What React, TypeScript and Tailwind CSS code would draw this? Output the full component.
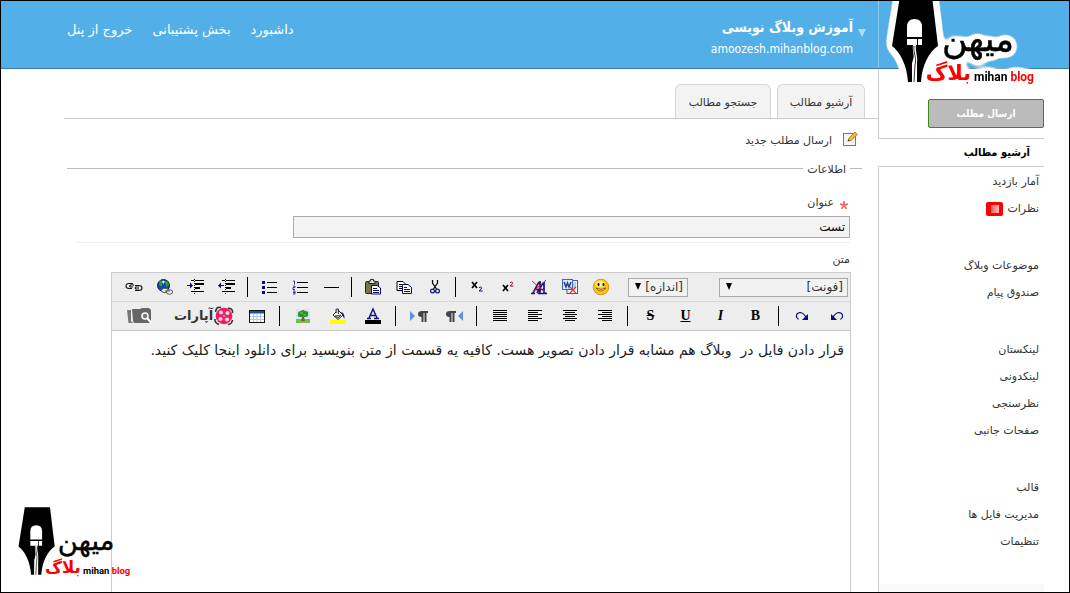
import React from 'react';

type Children = { children: React.ReactNode };

function Logo({ viewBox, halo, className }: { viewBox: string; halo: boolean; className: string }) {
  return (
    <svg viewBox={viewBox} className={className} role="img" aria-label="میهن بلاگ">
      {halo && (
        <defs>
          <filter id="halo" filterUnits="userSpaceOnUse" x="0" y="-20" width="190" height="120" colorInterpolationFilters="sRGB">
            <feGaussianBlur in="SourceAlpha" stdDeviation="4" />
            <feComponentTransfer result="spread">
              <feFuncA type="linear" slope="24" intercept="-0.900" />
            </feComponentTransfer>
            <feFlood floodColor="#fff" />
            <feComposite in2="spread" operator="in" result="white" />
            <feMerge>
              <feMergeNode in="white" />
              <feMergeNode in="SourceGraphic" />
            </feMerge>
          </filter>
        </defs>
      )}
      <g filter={halo ? 'url(#halo)' : undefined}>
        <path d="M30 -5 H62 L68 45 C59 51 52 64 51 81 H47 V62 L44 56 L42 62 V81 H38 C37 64 30 51 22 45 Z" fill="#000" />
        <g direction="rtl" fontFamily="'DejaVu Sans', sans-serif">
          <text x="144" y="50" fontSize="35" fill="#000" stroke="#000" strokeWidth="0.500">
            میهن
          </text>
          <text x="101" y="79" fontSize="21" fontWeight="bold" fill="#f00">
            بلاگ
          </text>
        </g>
        <text
          x="104"
          y="80"
          direction="ltr"
          fontFamily="Roboto, 'Liberation Sans', sans-serif"
          fontWeight="bold"
          fontSize="12"
          fill="#000"
        >
          mihan <tspan fill="#f00">blog</tspan>
        </text>
      </g>
      <path d="M37 36 V26 Q37 18 44.500 18 Q52 18 52 26 V36 Z" fill="#fff" />
      <path d="M37 38 H47 V44 H37 Z M48 38 H52 V44 H48 Z" fill="#fff" />
      <path d="M43 44 H46 C45 50 48 55 47 62 L46 81 H42 L43 62 C45 55 42 50 43 44 Z" fill="#fff" />
      <path d="M44 45 C43 52 47 56 45 64 L44 81" fill="none" stroke="#000" strokeWidth="0.800" />
    </svg>
  );
}

function Tool({ label, wide, children }: Children & { label: string; wide?: boolean }) {
  return (
    <button
      type="button"
      aria-label={label}
      title={label}
      className={
        wide
          ? 'flex h-5 w-[58px] shrink-0 items-center justify-center gap-px'
          : 'flex h-5 w-[23px] shrink-0 items-center justify-center'
      }
    >
      {children}
    </button>
  );
}

function Icon({ children }: Children) {
  return (
    <svg viewBox="0 0 16 16" className="h-4 w-4 shrink-0 overflow-visible" aria-hidden="true">
      {children}
    </svg>
  );
}

function Sep({ tight }: { tight?: boolean }) {
  return (
    <span className={tight ? '-mx-0.5 flex h-5 w-[3px] shrink-0 justify-center' : 'flex h-5 w-[3px] shrink-0 justify-center'}>
      <span className="w-px bg-black" />
    </span>
  );
}

function Lines({ d }: { d: string }) {
  return (
    <Icon>
      <path d={d} stroke="#000" strokeWidth="1" fill="none" shapeRendering="crispEdges" />
    </Icon>
  );
}

function Pilcrow({ flip }: { flip?: boolean }) {
  return (
    <Icon>
      <path d={flip ? 'M17 3 V13 L12 8 Z' : 'M-1 3 V13 L4 8 Z'} fill="#5b94dd" />
      <g transform={flip ? 'translate(-7 0)' : undefined}>
        <path d="M17 3 H11 Q7 3 7 6 Q7 9 10.500 9 V14 H12.500 V5 H13.500 V14 H15.500 V5 H17 Z" fill="#444" />
      </g>
    </Icon>
  );
}

function Dropdown({ label, text, className }: { label: string; text: string; className: string }) {
  return (
    <span className={className}>
      <select
        aria-label={label}
        className="block h-[19px] w-full appearance-none border border-[#aaa] bg-[#f2f2f2] px-1 text-[12px] leading-4 text-[#333]"
      >
        <option>{text}</option>
      </select>
      <svg viewBox="0 0 8 8" className="pointer-events-none absolute top-[5px] left-[6px] h-2 w-2" aria-hidden="true">
        <path d="M1 0 H7 L4 7 Z" fill="#000" />
      </svg>
    </span>
  );
}

function Toolbar() {
  return (
    <div className="border-b border-[#c5c5c5] bg-[#ededed]">
      <div className="flex h-[29px] items-center gap-2 border-b border-[#d8d8d8] pr-0.5">
        <Dropdown label="فونت" text="[فونت]" className="relative ml-[23px] w-[129px] shrink-0" />
        <Dropdown label="اندازه" text="[اندازه]" className="relative ml-2 w-[60px] shrink-0" />
        <Tool label="شکلک">
          <Icon>
            <circle cx="8" cy="8" r="7.800" fill="#f9c51c" stroke="#c98a08" strokeWidth="0.800" />
            <ellipse cx="7" cy="5" rx="5" ry="3.500" fill="#ffe978" />
            <ellipse cx="5.500" cy="5.500" rx="1" ry="1.800" fill="#222" />
            <ellipse cx="10.500" cy="5.500" rx="1" ry="1.800" fill="#222" />
            <path d="M3 9 Q8 15 13 9 Q8 12 3 9 Z" fill="#fff" stroke="#7a4a00" strokeWidth="0.800" />
          </Icon>
        </Tool>
        <Tool label="چسباندن از ورد">
          <Icon>
            <rect x="5" y="1.500" width="10.500" height="13" fill="#fff" stroke="#3a5c9c" />
            <path d="M11 4 H14 M11 6 H14 M11 8 H14" stroke="#7b9bd0" />
            <rect x="0.500" y="0.500" width="10" height="10" fill="#dbe8fb" stroke="#3a66b4" />
            <path d="M2 3 L4 8 L5.500 4 L7 8 L9 3" fill="none" stroke="#1d3f8c" strokeWidth="1.500" />
            <path d="M8 8 L14 14 M14 8 L8 14" stroke="#e33" strokeWidth="1.400" />
          </Icon>
        </Tool>
        <Tool label="حذف قالب">
          <Icon>
            <path d="M0 14.500 H4 M7 14.500 H16 M2 14 L8 3 M9 2 V14 M5 10.500 H13 M6 14 L12 4 M13 3 V14" stroke="#15158c" strokeWidth="1.700" fill="none" />
            <path d="M1 2 L15 14 M15 1 L2 13" stroke="#e02020" strokeWidth="1" />
          </Icon>
        </Tool>
        <Tool label="بالانویس">
          <Icon>
            <path d="M3 6 L8 12 M8 6 L3 12" stroke="#000" strokeWidth="1.700" />
            <path d="M10 4 Q11 2 12.500 3.500 Q13 5 10 7 H13.500" fill="none" stroke="#a01020" />
          </Icon>
        </Tool>
        <Tool label="زیرنویس">
          <Icon>
            <path d="M3 3 L8 9 M8 3 L3 9" stroke="#000" strokeWidth="1.700" />
            <path d="M10 9 Q11 7 12.500 8.500 Q13 10 10 12 H13.500" fill="none" stroke="#101080" />
          </Icon>
        </Tool>
        <Sep />
        <Tool label="برش">
          <Icon>
            <path d="M5.500 1 V4 L9.500 10 M10.500 1 V4 L6.500 10" fill="none" stroke="#000" strokeWidth="1.200" />
            <circle cx="5.500" cy="12" r="1.900" fill="none" stroke="#101080" strokeWidth="1.200" />
            <circle cx="10.500" cy="12" r="1.900" fill="none" stroke="#101080" strokeWidth="1.200" />
          </Icon>
        </Tool>
        <Tool label="کپی">
          <Icon>
            <path d="M1 2.500 H7 L9.500 5 V11.500 H1 Z" fill="#fff" stroke="#000" />
            <path d="M3 5.500 H6 M3 7.500 H6 M3 9.500 H6" stroke="#000" />
            <path d="M6.500 5.500 H12 L15.500 8.500 V14.500 H6.500 Z" fill="#fff" stroke="#0a0a70" />
            <path d="M8 8.500 H11 M8 10.500 H14 M8 12.500 H14" stroke="#0a0a70" />
          </Icon>
        </Tool>
        <Tool label="چسباندن">
          <Icon>
            <rect x="0.500" y="2.500" width="13" height="12" rx="1" fill="#77754a" stroke="#222" />
            <path d="M4 4.500 V2 H5.500 V0.500 H8.500 V2 H10 V4.500 Z" fill="#ddd" stroke="#222" />
            <path d="M6.500 6.500 H12 L15.500 9 V15 H6.500 Z" fill="#fff" stroke="#0a0a70" />
            <path d="M8 9.500 H12 M8 11.500 H14 M8 13.500 H14" stroke="#0a0a70" />
          </Icon>
        </Tool>
        <Sep />
        <Tool label="خط افقی">
          <Lines d="M0.500 8.500 H15.500" />
        </Tool>
        <Tool label="لیست شماره دار">
          <Icon>
            <path d="M5 3.500 H16 M5 8.500 H16 M5 13.500 H16" stroke="#000" shapeRendering="crispEdges" />
            <path d="M1 2 H2.500 V5.500 M1 7 H3 V8.500 H1 V10.500 H3 M1 12 H3 V15 H1 M1 13.500 H3" stroke="#22229a" fill="none" strokeWidth="0.900" />
          </Icon>
        </Tool>
        <Tool label="لیست">
          <Icon>
            <path d="M6 3.500 H16 M6 8.500 H16 M6 13.500 H16" stroke="#000" shapeRendering="crispEdges" />
            <path d="M1 2 H4 V5 H1 Z M1 7 H4 V10 H1 Z M1 12 H4 V15 H1 Z" fill="#0a0a80" />
          </Icon>
        </Tool>
        <Sep />
        <Tool label="کاهش تورفتگی">
          <Icon>
            <path d="M3 1.500 H6 M7 1.500 H16 M7 4.500 H16 M7 5.500 H16 M7 8.500 H12 M7 9.500 H12 M3 12.500 H16" stroke="#000" shapeRendering="crispEdges" />
            <path d="M6.500 0 V15" stroke="#000" strokeDasharray="1 1" />
            <path d="M-1 6.500 L2 3.500 V6 H5 V7 H2 V9.500 Z" fill="#0a0a80" />
          </Icon>
        </Tool>
        <Tool label="افزایش تورفتگی">
          <Icon>
            <path d="M3 1.500 H6 M7 1.500 H16 M7 4.500 H16 M7 5.500 H16 M7 8.500 H12 M7 9.500 H12 M3 12.500 H16" stroke="#000" shapeRendering="crispEdges" />
            <path d="M6.500 0 V15" stroke="#000" strokeDasharray="1 1" />
            <path d="M5 6.500 L2 3.500 V6 H-1 V7 H2 V9.500 Z" fill="#0a0a80" />
          </Icon>
        </Tool>
        <Tool label="پیوند">
          <Icon>
            <circle cx="6.500" cy="6.500" r="6" fill="#1546a8" stroke="#0a1d66" />
            <path d="M2 3 Q3 0 5 2 L5 7 Q2 8 2 3 Z M8 2 Q12 2 12 6 L9 8 Z" fill="#27a22c" />
            <path d="M5 2 Q7 1 8 3 L6 5 Z" fill="#dfeefc" />
            <ellipse cx="8" cy="11.500" rx="3.500" ry="2.200" fill="#eee" stroke="#555" />
            <ellipse cx="12.500" cy="13" rx="3.200" ry="2.200" fill="#eee" stroke="#555" />
            <path d="M8 12 H13" stroke="#555" />
          </Icon>
        </Tool>
        <Tool label="حذف پیوند">
          <Icon>
            <path
              d="M7 4.500 H3 Q0 4.500 0 7 Q0 9.500 3 9.500 H6 M8 6.500 Q6 5 4 6.500 Q3 8 5 8 H7 M9 6.500 H13 Q16 6.500 16 9 Q16 11.500 13 11.500 H9 M13 8 H10 Q8.500 9 10 10 H13"
              fill="none"
              stroke="#111"
              strokeWidth="1.100"
            />
          </Icon>
        </Tool>
      </div>
      <div className="flex h-7 items-center gap-3 pr-0.5">
        <Tool label="واگرد">
          <Icon>
            <path d="M4 9 Q7 4.500 10 4.500 Q14 5 13.500 9 L11.500 11.500" fill="none" stroke="#0a0a80" strokeWidth="1.200" />
            <path d="M2 6 V12 H8 Z" fill="#0a0a80" />
          </Icon>
        </Tool>
        <Tool label="ازنو">
          <Icon>
            <path d="M12 9 Q9 4.500 6 4.500 Q2 5 2.500 9 L4.500 11.500" fill="none" stroke="#0a0a80" strokeWidth="1.200" />
            <path d="M14 6 V12 H8 Z" fill="#0a0a80" />
          </Icon>
        </Tool>
        <Sep tight />
        <Tool label="ضخیم">
          <span className="font-['Liberation_Serif',serif] text-[14px] leading-4 font-black text-black">B</span>
        </Tool>
        <Tool label="مورب">
          <span className="font-['Liberation_Serif',serif] text-[14px] leading-4 font-black text-black italic">I</span>
        </Tool>
        <Tool label="زیرخط">
          <span className="font-['Liberation_Serif',serif] text-[14px] leading-4 font-black text-black underline">U</span>
        </Tool>
        <Tool label="خط خورده">
          <span className="font-['Liberation_Serif',serif] text-[14px] leading-4 font-black text-black line-through">S</span>
        </Tool>
        <Sep tight />
        <Tool label="راست چین">
          <Lines d="M1 2.500 H15 M5 4.500 H15 M1 6.500 H15 M5 8.500 H15 M1 10.500 H15 M5 12.500 H15" />
        </Tool>
        <Tool label="وسط چین">
          <Lines d="M1 2.500 H15 M3 4.500 H13 M1 6.500 H15 M3 8.500 H13 M1 10.500 H15 M3 12.500 H13" />
        </Tool>
        <Tool label="چپ چین">
          <Lines d="M1 2.500 H15 M1 4.500 H11 M1 6.500 H15 M1 8.500 H11 M1 10.500 H15 M1 12.500 H11" />
        </Tool>
        <Tool label="تراز دوطرفه">
          <Lines d="M1 2.500 H15 M1 4.500 H15 M1 6.500 H15 M1 8.500 H15 M1 10.500 H15 M1 12.500 H15" />
        </Tool>
        <Sep tight />
        <Tool label="راست به چپ">
          <Pilcrow flip />
        </Tool>
        <Tool label="چپ به راست">
          <Pilcrow />
        </Tool>
        <Sep tight />
        <Tool label="رنگ متن">
          <Icon>
            <path d="M2 10.500 H6 M9 10.500 H14 M4 10 L8 1 L12 10 M5.500 7.500 H10.500" stroke="#15157f" strokeWidth="1.500" fill="none" />
            <rect x="0" y="12" width="16" height="4" fill="#000" />
          </Icon>
        </Tool>
        <Tool label="رنگ زمینه">
          <Icon>
            <path d="M3 7 L8 2 L13 7 L8 11.500 Z" fill="#fff" stroke="#222" />
            <path d="M6 5 V1 H8.500 V6 M5 8 L11 7 L8 10 Z" fill="#bbb" stroke="#222" strokeWidth="0.800" />
            <path d="M11 4 Q15 5 14.500 11 Q13 9 12.500 7 Z" fill="#15157f" />
            <rect x="0" y="12" width="16" height="4" fill="#ff0" />
          </Icon>
        </Tool>
        <Tool label="تصویر">
          <Icon>
            <rect x="1" y="1" width="14" height="14" fill="#cfe8f8" />
            <path d="M1 11 H15 V15 H1 Z" fill="#74bd4a" />
            <path d="M7 9 H9 L10 13 H6 Z" fill="#8a5a22" />
            <path d="M3 6 Q3 3 6 3 Q8 1 10 3 Q14 3 13 6 Q14 9 10 9 H5 Q2 9 3 6 Z" fill="#2f8f2a" />
            <path d="M5 5 H8 M8 7 H11" stroke="#7ccc4c" />
          </Icon>
        </Tool>
        <Sep tight />
        <Tool label="جدول">
          <Icon>
            <rect x="0.500" y="2.500" width="15" height="12" fill="#fff" stroke="#111" />
            <rect x="1" y="3" width="14" height="2.500" fill="#1c49b8" />
            <path d="M4.500 6 V14 M8 6 V14 M11.500 6 V14 M1 8.500 H15 M1 11.500 H15" stroke="#b5c7e4" />
          </Icon>
        </Tool>
        <Tool label="آپارات" wide>
          <svg viewBox="0 0 20 20" className="h-5 w-5 shrink-0" aria-hidden="true">
            <path d="M7 1.500 Q3 0.500 2 4 L1.500 6 M14 2 L17 3 Q19 4 18.500 7 M18.500 14 Q18 18 14 18.500 M1 13 Q0.500 17 5 18.500" fill="none" stroke="#333" strokeWidth="1.600" />
            <circle cx="10" cy="10" r="8.300" fill="#ed1c62" />
            <circle cx="7" cy="6.500" r="2.100" fill="#fbd5e2" />
            <circle cx="13.500" cy="7" r="2.100" fill="#fbd5e2" />
            <circle cx="6.500" cy="13" r="2.100" fill="#fbd5e2" />
            <circle cx="13" cy="13.500" r="2.100" fill="#fbd5e2" />
            <circle cx="10" cy="10" r="0.800" fill="#fff" />
          </svg>
          <span className="text-[13px] leading-5 font-bold text-[#333]">آپارات</span>
        </Tool>
        <span className="mr-3 flex">
          <Tool label="مدیریت فایل">
            <svg viewBox="0 0 26 18" className="h-[18px] w-[26px] shrink-0" aria-hidden="true">
              <path d="M0 3 H4 V14 L6 16 H1.500 Z" fill="#777" />
              <path d="M5 2 H13 L15 1 H22 L24 3 V16 H8 Q6 16 6 13 Z" fill="#666" />
              <circle cx="18" cy="9" r="3" fill="#777" stroke="#fff" strokeWidth="1.500" />
              <path d="M20 11 L24.500 16" stroke="#fff" strokeWidth="2" />
            </svg>
          </Tool>
        </span>
      </div>
    </div>
  );
}

const groups = [
  ['آمار بازدید', 'نظرات'],
  ['موضوعات وبلاگ', 'صندوق پیام'],
  ['لینکستان', 'لینکدونی', 'نظرسنجی', 'صفحات جانبی'],
  ['قالب', 'مدیریت فایل ها', 'تنظیمات'],
];

function Sidebar() {
  return (
    <aside className="flex w-[191px] shrink-0 flex-col pr-[25px]">
      <div className="flex h-[70px] items-end border-b border-l border-[#ccc] pb-[10px]">
        <button
          type="button"
          className="h-[29px] w-[116px] rounded-xs border border-[#3c8a14] bg-[#bbb] font-['DejaVu_Sans_Condensed','DejaVu_Sans',sans-serif] text-[10px] font-bold text-white"
        >
          ارسال مطلب
        </button>
      </div>
      <a
        href="#archive"
        className="flex h-[27px] items-center pt-0.5 pr-[14px] font-['DejaVu_Sans_Condensed','DejaVu_Sans',sans-serif] text-[11px] font-bold text-black"
      >
        آرشیو مطالب
      </a>
      <nav className="flex flex-1 flex-col justify-between border-t border-l border-[#ccc] pt-0.5">
        <div className="flex flex-col gap-[30px]">
          {groups.map((group) => (
            <ul key={group[0]}>
              {group.map((item) => (
                <li key={item} className="flex h-[27px] items-center gap-1 pr-[5px]">
                  <a href="#item">{item}</a>
                  {item === 'نظرات' && (
                    <span className="mb-0.5 flex h-[14px] w-[17px] items-center justify-center rounded-xs bg-[#f00]">
                      <span className="h-2 w-2 bg-linear-to-r from-[#f55] to-[#fbb]" />
                    </span>
                  )}
                </li>
              ))}
            </ul>
          ))}
        </div>
        <div className="h-2 bg-[#f9f9f9]" />
      </nav>
    </aside>
  );
}

export default function App() {
  return (
    <div
      dir="rtl"
      className="relative flex min-h-screen flex-col border border-black bg-white font-['DejaVu_Sans',sans-serif] text-[11px] text-[#333]"
    >
      <header className="relative flex h-[68px] border-b border-[#3c7ea8] bg-[#52afe7] text-white">
        <div className="w-[191px] shrink-0 border-l border-[#8cc8ee]">
          <Logo viewBox="15 0 155 90" halo className="absolute top-0 right-[29px] z-10 h-[90px] w-[155px]" />
        </div>
        <div className="flex flex-1 items-start justify-between pr-3 pl-[66px]">
          <div className="flex gap-[5px] pt-[14px]">
            <svg viewBox="0 0 8 8" className="mt-[14px] h-2 w-2" aria-hidden="true">
              <path d="M0 0 H8 L4 8 Z" fill="#b5dcf5" />
            </svg>
            <div className="font-['DejaVu_Sans_Condensed','DejaVu_Sans',sans-serif]">
              <h1 className="text-[14px] leading-6 font-bold">آموزش وبلاگ نویسی</h1>
              <p dir="ltr" className="text-right text-[12px] leading-5">
                amoozesh.mihanblog.com
              </p>
            </div>
          </div>
          <nav className="flex gap-5 pt-[19px] text-[13px] leading-5">
            <a href="#dashboard">داشبورد</a>
            <a href="#support">بخش پشتیبانی</a>
            <a href="#logout">خروج از پنل</a>
          </nav>
        </div>
      </header>

      <div className="flex flex-1">
        <Sidebar />
        <main className="flex min-w-0 flex-1 flex-col">
          <div className="mt-[15px] ml-[63px] flex h-[35px] gap-1.5 border-b border-[#ccc] pr-[13px]">
            <a
              href="#archive"
              className="flex w-[88px] items-center justify-center rounded-t-md border border-b-0 border-[#d5d5d5] bg-[#f3f3f3] pt-1"
            >
              آرشیو مطالب
            </a>
            <a
              href="#search"
              className="flex w-24 items-center justify-center rounded-t-md border border-b-0 border-[#d5d5d5] bg-[#f3f3f3] pt-1"
            >
              جستجو مطالب
            </a>
          </div>
          <h2 className="mt-3 flex h-5 items-center gap-2.5 pr-5">
            <svg viewBox="0 0 16 16" className="-mt-1 h-4 w-4" aria-hidden="true">
              <rect x="1.500" y="2.500" width="12" height="12" fill="#f5f5f5" stroke="#777" />
              <path d="M6 10 L7 7 L13 1 L15.500 3.500 L9 9.500 Z" fill="#f3b63a" stroke="#a8741a" strokeWidth="0.800" />
              <path d="M5.500 10.500 L8 9.500 L6.500 8.500 Z" fill="#333" />
            </svg>
            ارسال مطلب جدید
          </h2>
          <fieldset className="mt-[7px] mr-4 ml-[66px] flex min-w-0 flex-1 flex-col border-t border-[#bbb] pr-3">
            <legend className="px-1 pt-1 leading-4">اطلاعات</legend>
            <form className="flex flex-1 flex-col">
              <div className="ml-2.5 border-b border-[#eee] pt-[15px] pb-1">
                <label htmlFor="title" className="flex h-5 items-center gap-1.5 pr-0.5">
                  <svg viewBox="0 0 8 8" className="mt-1 h-2 w-2" aria-hidden="true">
                    <path d="M4 0 V4 M0 3 L4 4 L8 3 M1.500 8 L4 4 L6.500 8" stroke="#e66" strokeWidth="1.700" fill="none" />
                  </svg>
                  عنوان
                </label>
                <input
                  id="title"
                  defaultValue="تست"
                  className="mt-[3px] block h-[22px] w-[72%] border border-[#aaa] bg-[#f3f3f3] px-1 text-[12px] text-black"
                />
              </div>
              <label htmlFor="body" className="mt-[7px] block h-5 leading-5">
                متن
              </label>
              <div className="mt-0.5 -mr-px ml-11 flex flex-1 flex-col border border-b-0 border-[#ccc]">
                <Toolbar />
                <textarea
                  id="body"
                  defaultValue="قرار دادن فایل در  وبلاگ هم مشابه قرار دادن تصویر هست. کافیه یه قسمت از متن بنویسید برای دانلود اینجا کلیک کنید."
                  className="w-full flex-1 resize-none bg-white px-1.5 py-[7px] text-[14px] leading-6 text-[#222] outline-none"
                />
              </div>
            </form>
          </fieldset>
        </main>
      </div>

      <Logo viewBox="15 -5 150 95" halo={false} className="absolute bottom-[10px] left-3 h-[75px] w-[118px]" />
    </div>
  );
}
